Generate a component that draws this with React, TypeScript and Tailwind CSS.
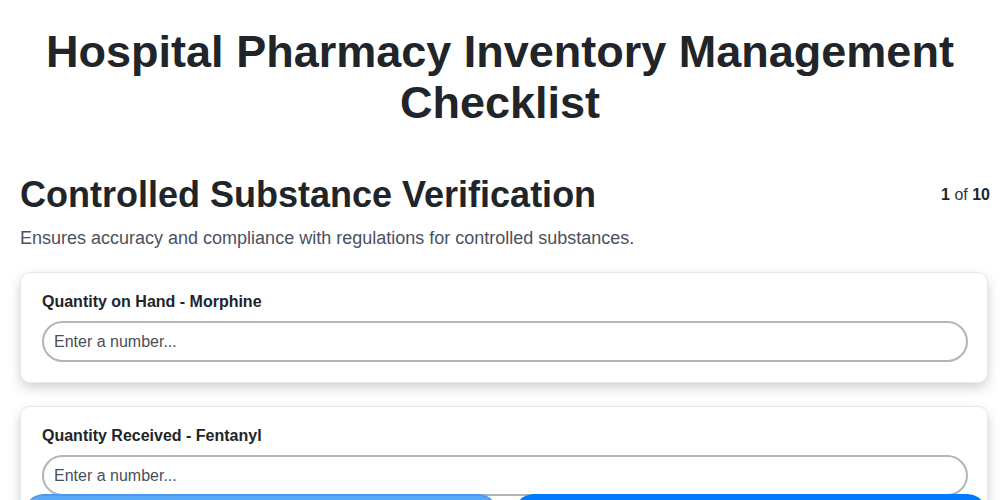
const fields = [
  { label: "Quantity on Hand - Morphine" },
  { label: "Quantity Received - Fentanyl" },
  { label: "Quantity Dispensed - Oxycodone" },
];

export default function App() {
  return (
    <div className="min-h-screen bg-white px-5 pb-24 text-[#212529] font-['Liberation_Sans',Arial,sans-serif]">
      <h1 className="pt-[26px] text-center text-[45px] font-bold leading-[51px]">
        Hospital Pharmacy Inventory Management Checklist
      </h1>

      <div className="mt-[45px] mr-[-10px] flex items-center justify-between">
        <h2 className="text-[36px] font-bold leading-[43px]">Controlled Substance Verification</h2>
        <div className="text-base text-[#333]">
          <span className="font-bold text-[#212529]">1</span> of{" "}
          <span className="font-bold text-[#212529]">10</span>
        </div>
      </div>
      <p className="mt-[9px] text-lg leading-[27px] text-[#4a5160]">
        Ensures accuracy and compliance with regulations for controlled substances.
      </p>

      <div className="mt-[20px] mr-[-8px] flex flex-col gap-[23px]">
        {fields.map((f) => (
          <div
            key={f.label}
            className="rounded-[10px] border border-[#e6e8ec] bg-white pl-[21px] pr-[19px] pt-5 pb-5 shadow-[0_5px_12px_rgba(0,0,0,0.18)]"
          >
            <label className="block text-base font-bold leading-[18px] text-[#212529]">{f.label}</label>
            <input
              type="number"
              placeholder="Enter a number..."
              className="mt-[10px] block h-[41px] w-full rounded-full border-2 border-[#adb5bd] bg-white px-[10px] text-base text-[#212529] placeholder:text-[#495057] outline-none"
            />
          </div>
        ))}
      </div>

      <div className="fixed bottom-0 left-0 right-0 flex h-[6px] gap-4 pl-6 pr-[13px]">
        <button className="h-[46px] flex-1 rounded-[20px] border-t-2 border-[#4b98ef] bg-[#5aa9f8] font-bold text-white">
          Previous
        </button>
        <button className="h-[46px] flex-1 rounded-[20px] bg-[#007bff] font-bold text-white">Next</button>
      </div>
    </div>
  );
}
